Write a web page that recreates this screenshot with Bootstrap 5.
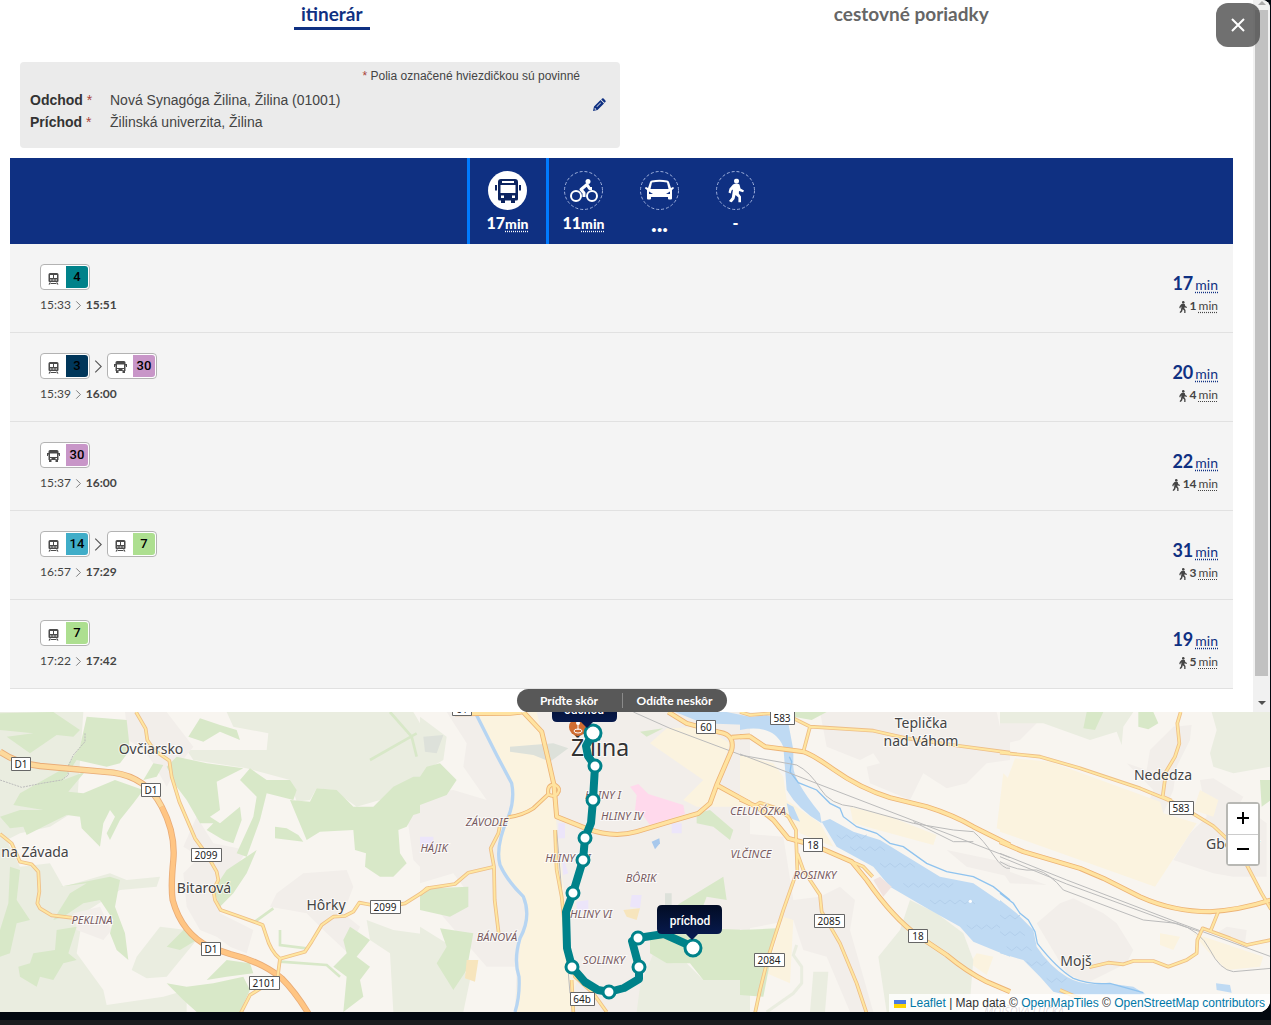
<!DOCTYPE html>
<html lang="sk">
<head>
<meta charset="utf-8">
<meta name="viewport" content="width=device-width, initial-scale=1">
<title>Itinerár</title>
<link rel="stylesheet" href="https://cdn.jsdelivr.net/npm/bootstrap@5.3.0/dist/css/bootstrap.min.css">
<script src="https://cdn.jsdelivr.net/npm/bootstrap@5.3.0/dist/js/bootstrap.bundle.min.js"></script>
<style>
  body { background: #1a1b1d; font-family: Lato, sans-serif; color: #444; }
  .shell { background: #02080f; padding: 0 1px 8px 0; }
  .app { background: #fff; border-radius: 0 8px 12px 0; overflow: hidden; }
  .main-col { padding: 0 20px 0 10px; }
  .mode-tabs { height: 62px; padding: 0 32px; }
  .mode-tabs a { font-size: 19px; line-height: 27px; font-weight: 700; color: #666; text-decoration: none; }
  .mode-tabs a.current { color: #0f3082; border-bottom: 3px solid #0f3082; padding: 0 7px; }
  .trip-form { background: #ebebeb; border-radius: 4px; max-width: 600px; height: 86px; margin: 0 10px 10px; padding: 4px 10px 0; font-family: "Liberation Sans", sans-serif; font-size: 14px; line-height: 22px; }
  .trip-form .note { font-size: 12px; line-height: 20px; padding-right: 30px; margin-bottom: 3px; }
  .trip-form dt { width: 80px; color: #333; }
  .star { color: #a94438; font-weight: 400; }
  .edit-btn { top: 36px; right: 14px; width: 14px; height: 14px; }
  .modes { background: #0f3082; height: 86px; }
  .modes button { width: 76px; height: 86px; color: #fff; background: none; padding-top: 13px; font-size: 16px; line-height: 26px; font-weight: 900; }
  .modes button.chosen { box-shadow: -3px 0 #007bff, 3px 0 #007bff; }
  .modes abbr { font-size: 14px; }
  .modes .pending { font-size: 24px; }
  .modes svg { width: 39px; height: 39px; }
  abbr { text-decoration: underline dotted 1px; text-underline-offset: 2px; cursor: default; }
  .trip { background: #f4f4f4; border-bottom: 1px solid #e1e1e1; height: 89px; padding: 20px 15px 0 30px; }
  .leg { width: 50px; height: 26px; background: #fff; border: 1px solid #b3b3b3; border-radius: 4px; padding: 1px; }
  .leg svg { width: 13px; height: 13px; margin: 2px 0 0 5px; }
  .leg b { width: 22px; height: 22px; border-radius: 0 3px 3px 0; color: #000; font: 500 13px/21px Roboto, sans-serif; text-align: center; }
  .no4 { background: #00828a; } .no3 { background: #00365a; } .no30 { background: #c896c8; } .no14 { background: #40adc8; } .no7 { background: #addf90; }
  .times { font-size: 12px; line-height: 16px; margin-top: 7px; }
  .total { font-size: 18px; line-height: 24px; font-weight: 700; color: #0f3082; margin-top: 7px; }
  .total abbr { font-size: 14px; font-weight: 400; margin-left: 2px; }
  .walk { font-size: 12px; line-height: 16px; margin-top: 1px; }
  .walk abbr { margin-left: 2px; }
  .shift { background: #585858; border-radius: 12px; width: 210px; height: 23px; }
  .shift button { background: none; color: #fff; font-size: 12px; line-height: 15px; font-weight: 700; padding: 0; }
  .shift button + button { border-left: 1px solid #8a8a8a; }
  .scroll-rail { width: 17px; background: #f1f1f1; padding: 0 2px; }
  .rail-arrow { height: 10px; }
  .rail-thumb { background: #c1c1c1; margin-bottom: 22px; }
  .close-btn { top: 3px; right: 10px; width: 44px; height: 44px; border-radius: 12px; background: rgba(80,80,80,.82); }
  .close-btn svg { display: block; margin: 0 auto; }
  .map { height: 300px; background: #f8f5f0; }
  .zoomer { top: 90px; right: 10px; width: 34px; border: 2px solid #b8b8b4; border-radius: 4px; background: #fff; }
  .zoomer button { height: 30px; background: #fff; padding: 0; }
  .zoomer button + button { border-top: 1px solid #ccc; }
  .zoomer svg { display: block; margin: 0 auto; }
  .credit { right: 0; bottom: 0; background: rgba(255,255,255,.8); font: 12px/18px "Liberation Sans", sans-serif; padding: 0 5px; color: #333; }
  .credit a { color: #0078a8; text-decoration: none; }
  .town { font: 14px "Noto Sans", sans-serif; fill: #444; text-anchor: middle; paint-order: stroke; stroke: #fff; stroke-opacity: .7; stroke-width: 2px; }
  .big { font-size: 23px; fill: #333; }
  .quarter { font: italic 11px "Noto Sans", sans-serif; fill: #785a60; text-anchor: middle; paint-order: stroke; stroke: #fff; stroke-opacity: .7; stroke-width: 2px; }
  .shield { font: 10px "Noto Sans", sans-serif; fill: #222; text-anchor: middle; }
  .plate { fill: #fff; stroke: #666; }
  .pin-text { font: 500 12px Roboto, sans-serif; fill: #fff; text-anchor: middle; }
</style>
</head>
<body>
<svg class="d-none" aria-hidden="true">
  <symbol id="tram" viewBox="0 0 13 13"><path fill="#4a4a4a" fill-rule="evenodd" d="M3 1h7q1.500 0 1.500 1.500V9q0 1-1 1H2.500q-1 0-1-1V2.500Q1.500 1 3 1zM3 3v3h3V3zm4 0v3h3V3zM3 7.500v1h1.500v-1zm5.500 0v1H10v-1zM5.500 7.500v1h2v-1zM2.500 10.500h1.500l-1 2H1.500zM9 10.500h1.500l1 2H10zM3 11h7v1H3z"/></symbol>
  <symbol id="bus" viewBox="0 0 13 13"><path fill="#4a4a4a" fill-rule="evenodd" d="M3 0h7q1.500 0 1.500 1.500V3H13v3h-1V4.500h-.5V10H11v2H8.500v-2h-4v2H2v-2h-.5V4.500H1V6H0V3h1.500V1.500Q1.500 0 3 0zM3 3.500v3.500h7V3.500zM3 8v1.200h1.500V8zm5.500 0v1.200H10V8z"/></symbol>
  <symbol id="walker" viewBox="0 0 16 24"><circle cx="8.500" cy="2.500" r="2.500"/><path d="M5 6q3.500-2 6.500 0l1 4 3.500 2-.9 1.800L11 12.500l-.2 2.500 2.200 3V24h-2.600v-5L7.500 16.500 6.500 20.500 3.500 24 1 22.500 3.800 19 5 11l-1.500 1-.8 3L.5 14l1-4z"/></symbol>
</svg>
<div class="shell">
<div class="app position-relative">
  <div class="d-flex">
    <main class="main-col flex-grow-1">
      <nav class="mode-tabs d-flex" aria-label="Zobrazenie">
        <div class="w-50 text-center"><a class="current d-inline-block" href="#itinerar">itinerár</a></div>
        <div class="w-50 text-center"><a class="d-inline-block" href="#poriadky">cestovné poriadky</a></div>
      </nav>
      <section class="trip-form position-relative">
        <div class="note text-end"><span class="star">*</span> Polia označené hviezdičkou sú povinné</div>
        <dl class="m-0">
          <div class="d-flex"><dt>Odchod <span class="star">*</span></dt><dd class="m-0">Nová Synagóga Žilina, Žilina (01001)</dd></div>
          <div class="d-flex"><dt>Príchod <span class="star">*</span></dt><dd class="m-0">Žilinská univerzita, Žilina</dd></div>
        </dl>
        <button class="edit-btn position-absolute border-0 bg-transparent p-0 d-flex" aria-label="Upraviť"><svg width="14" height="14" viewBox="0 0 14 14" fill="#0f3082"><path fill-rule="evenodd" d="M1 13l1-4.500L8.500 2l3.500 3.500L5.500 12zm1.500-1.800l.7.600 1.300-.4-1.600-1.600zM4.500 8.600l.5.500 4-4-.5-.5z"/><path d="M9.200 1.500l.9-.9q.8-.7 1.500 0l1.800 1.800q.7.800 0 1.500l-.9.900z"/></svg></button>
      </section>
      <nav class="modes d-flex justify-content-center" aria-label="Doprava">
        <button class="chosen border-0 px-0 pb-0 d-flex flex-column align-items-center">
          <svg viewBox="0 0 39 39"><circle cx="19.500" cy="19.500" r="19.500" fill="#fff"/><path fill="#0c2460" fill-rule="evenodd" d="M13 8h14q3 0 3 3v17q0 1.500-1.500 1.500H27V32h-4v-2.500h-6V32h-4v-2.500h-1.500Q10 29.500 10 28V11q0-3 3-3zM14 10v2h12v-2zM12.500 14v8h15v-8zM13 24.500v2.500h3v-2.500zm11 0v2.500h3v-2.500zM7 14h2v5.500H7zM31 14h2v5.500h-2z"/></svg>
          <span>17<abbr title="minút">min</abbr></span></button>
        <button class="border-0 px-0 pb-0 d-flex flex-column align-items-center">
          <svg viewBox="0 0 39 39" fill="none" stroke="#fff"><circle cx="19.500" cy="19.500" r="19" stroke="#9fb0dc" stroke-dasharray="3 2"/><g stroke-width="2"><circle cx="12" cy="25" r="5"/><circle cx="28" cy="25" r="5"/><path stroke-width="3" stroke-linejoin="round" d="M20 26v-4l-3-3.500 6-5 2.500 4H28"/></g><circle cx="24" cy="10.500" r="2.500" fill="#fff" stroke="none"/></svg>
          <span>11<abbr title="minút">min</abbr></span></button>
        <button class="border-0 px-0 pb-0 d-flex flex-column align-items-center">
          <svg viewBox="0 0 39 39"><circle cx="19.500" cy="19.500" r="19" fill="none" stroke="#9fb0dc" stroke-dasharray="3 2"/><path fill="#fff" fill-rule="evenodd" d="M12 9.500q7.500-1.500 15 0 1.500.3 2 1.500l2 6 2-1q1 0 .8 1.500L32 19v8.500q0 1-1 1h-2q-1 0-1-1V26H11v1.500q0 1-1 1H8q-1 0-1-1V19l-2-1.500Q5 16 6 16l2 1 2-6q.5-1.200 2-1.500zM12 11.500L10.500 18h18L27 11.500q-7.500-1.300-15 0zM9 20.500V23h4zm21 0L26 23h4z"/></svg>
          <span class="pending">...</span></button>
        <button class="border-0 px-0 pb-0 d-flex flex-column align-items-center">
          <svg viewBox="0 0 39 39"><circle cx="19.500" cy="19.500" r="19" fill="none" stroke="#9fb0dc" stroke-dasharray="3 2"/><use href="#walker" x="12" y="7.500" width="16" height="24" fill="#fff"/></svg>
          <span>-</span></button>
      </nav>
      <section id="trips"></section>
      <div class="shift d-flex align-items-center mx-auto"><button class="w-50 border-0">Príďte skôr</button><button class="w-50 border-top-0 border-end-0 border-bottom-0">Odíďte neskôr</button></div>
    </main>
    <div class="scroll-rail d-flex flex-column" aria-hidden="true">
      <svg class="rail-arrow" viewBox="0 0 13 10"><path d="M3 5l4-4 4 4z" fill="#aaa"/></svg>
      <div class="rail-thumb flex-grow-1"></div>
      <svg class="rail-arrow mb-1" viewBox="0 0 13 10"><path d="M3 3h8L7 7z" fill="#505050"/></svg>
    </div>
  </div>
  <button class="close-btn position-absolute border-0 p-0" aria-label="Zavrieť"><svg width="14" height="14" viewBox="0 0 14 14" stroke="#fff" stroke-width="2"><path d="M1 1l12 12M13 1L1 13"/></svg></button>

  <section class="map position-relative overflow-hidden" aria-label="Mapa">
  <svg class="d-block" width="100%" height="300" viewBox="0 712 1270 300" preserveAspectRatio="xMidYMid slice">
    <defs>
      <g id="roads">
        <g transform="translate(0 700) scale(.33333)">
          <path d="M408 36L437 86L442 120L462 150L508 182L515 230L538 305L585 415L620 463L650 515L655 540L640 570L645 600L662 630L720 650L788 675L798 705Q812 755 840 776L915 755L935 725L965 675L1000 650L1035 648L1060 635L1078 608L1100 612L1155 622L1215 610L1290 563"/>
          <path d="M0 402L35 430L60 485L95 493L115 515L118 575L112 610L120 625L155 646L230 655M840 776L833 830L790 860L750 885L722 940"/>
        </g>
        <g transform="translate(420 680) scale(.33333)">
          <path d="M0 643L20 625L105 612L145 578L222 560M265 415L240 435L235 460L212 505L222 560L224 660L236 760M405 450L410 570L425 650L440 800L465 890L520 940L560 996M455 900L460 996"/>
        </g>
        <g transform="translate(740 700) scale(.33333)">
          <path d="M0 36L30 45L90 40L150 50L210 80L190 155M210 80L400 92L500 115L660 138L810 158M168 410L172 510L130 630L85 770L60 870L45 940M172 460L190 510L240 585L245 635L300 730L350 850L380 940M340 487L370 500L398 530M40 320L60 308L110 325L145 350L168 390V420"/>
        </g>
        <g transform="translate(1000 690) scale(.33333)">
          <path d="M0 188L120 200L240 235L420 295L505 330L545 350L640 408L685 450L730 505L785 610L813 658M542 66L532 100L538 160L525 200L498 245L488 320L515 332M268 832L325 818L370 823L400 813L460 813L505 830L560 810L590 790L592 750L608 715L690 745L740 765L813 750M655 665L632 722M180 900L250 930"/>
        </g>
      </g>
      <g id="mainroads">
        <g transform="translate(420 680) scale(.33333)"><path d="M105 101L270 100L305 96M310 96L365 155L385 240L402 315L410 410L500 446Q580 475 650 455L750 425L835 400L870 370L890 315L935 210Q945 165 900 157L800 130L745 96M890 315L990 370M935 172L990 168"/></g>
        <g transform="translate(740 700) scale(.33333)"><path d="M0 110L30 110L75 140L190 155Q220 165 280 208Q360 265 450 293L560 320Q640 345 700 380L810 435M0 297L50 320L100 360L145 415L220 435L335 485L380 540Q460 655 535 708L620 765Q680 815 740 845L810 875"/></g>
        <g transform="translate(1000 690) scale(.33333)"><path d="M0 455L70 485L240 535L310 565L420 620Q520 665 630 665Q720 660 813 630"/></g>
      </g>
      <g id="ramp">
        <g transform="translate(420 680) scale(.33333)"><path d="M265 412Q310 405 340 385L385 343M385 343Q380 312 405 314Q425 325 412 342Q398 352 385 343"/></g>
      </g>
    </defs>
    <rect y="712" width="1270" height="300" fill="#f8f5f0"/>
    <g transform="translate(0 700) scale(.33333)">
      <path fill="#eaede0" d="M0 36H250L230 330L150 380L60 400L20 420L60 500L150 490L190 560L330 520L380 540L480 530L470 560L360 570L250 640L230 760L310 870L320 915L490 890L560 870V936H0zM560 150L800 150L805 100L700 80L680 36H1240L1290 120V225L1230 240L1210 290L1140 300L1070 320L1000 270L950 265L930 300L890 305L870 240L740 205L580 180zM480 680L560 690L590 720L500 830L440 835L395 810L410 770zM1100 660L1180 690L1290 705V936H1180L1170 760L1110 720z"/>
      <path fill="#f2eeea" d="M375 36H500L580 140L540 190L500 260L460 190L430 150L385 120zM590 350L640 430L740 450L700 520L640 560L660 640L760 690L740 760L690 740L650 710L600 690L560 620L550 520L600 470L550 440zM830 580L910 520L1040 510L1060 560L1030 640L1080 680L1040 755L970 690L920 640L810 620zM220 640L300 620L335 690L310 720L230 690zM1220 340H1290V530L1240 480z"/>
      <path fill="#d8e8c8" d="M0 40L160 36L240 90L220 110L170 105L90 160L20 110L100 100L0 90zM260 50L380 60L390 150L360 190L320 200L230 180L190 240L255 215L205 275L250 280L345 240L430 270L400 310L360 360L330 420L320 400L345 350L330 330L310 370L300 440L245 385L240 350L200 345L150 370L80 405L70 380L30 385L0 350L60 330L130 330L40 315L60 280L200 200L240 140zM600 55L660 75L710 90L720 120L660 95L610 125L565 110zM530 170L620 190L730 205L650 245L660 330L630 350L660 370L720 320L725 360L700 430L670 420L620 390L640 370L600 370L560 300L530 260L500 200zM460 190L490 195L470 230L430 240zM750 205L800 240L870 240L890 270L880 300L800 280L780 360L740 470L710 460L760 350L770 290L720 240zM825 380L860 385L895 405L910 425L825 415zM870 300L930 305L950 265L1010 270L1060 320L1120 320L1180 260L1240 230H1290V330L1240 345L1220 380L1195 390L1200 460L1220 490L1180 530L1140 530L1095 500L1098 460L1065 450L1060 390L960 395L920 420zM30 500L60 510L50 600L90 660L50 670L30 760L0 770V690L25 610zM330 530L360 540L345 620L375 700L385 780L350 750L330 700L340 660L300 600L250 610L190 650L160 660L210 580L260 550L180 560zM170 690L230 680L205 760L230 780L190 790L160 840L120 830L110 860L60 830L55 800L90 790L100 760L165 750zM500 850L560 860L640 850L730 830L750 870L720 936H590L550 900zM620 840L680 780L750 790L760 820L680 830zM770 450L740 520L700 580L660 620L640 570L680 510zM560 680L590 720L540 750L500 740zM1050 680L1110 720L1070 770L1110 800L1080 840L1090 890L1030 936L1040 830L1000 800L1040 760L1030 720z"/>
      <path fill="none" stroke="#d8e8c8" stroke-width="8" d="M1110 180L1250 100M1170 36L1235 110L1250 170M765 665L820 625M840 690V735L920 745M840 785L980 795L1020 830"/>
      <path fill="none" stroke="#bbb" stroke-width="3" stroke-dasharray="6 3" d="M255 100V125L220 165L203 202L205 225L185 240L125 250L65 262L0 240"/>
      <path fill="none" stroke="#e9ac77" stroke-width="19" d="M0 155Q50 190 120 198L340 218Q440 232 485 320Q527 400 520 480Q512 560 518 600Q545 700 630 742L690 762Q785 785 845 835Q885 875 925 940"/>
      <path fill="none" stroke="#fdd99c" stroke-width="14" d="M0 155Q50 190 120 198L340 218Q440 232 485 320"/><path fill="none" stroke="#ffc583" stroke-width="14" d="M485 320Q527 400 520 480Q512 560 518 600Q545 700 630 742L690 762Q785 785 845 835Q885 875 925 940"/>
    </g>
    <g transform="translate(420 680) scale(.33333)">
      <path fill="#f2eeea" d="M80 96H990V760L880 740L700 900L660 996H285L290 860L200 860L60 700L130 620L100 580L0 610V340L100 330L200 360L130 260L140 190z"/>
      <path fill="#fbf3df" d="M160 96H350L400 300L410 440L435 660L440 800L470 900L450 996H285L300 800L320 680L240 560L235 470L275 370L270 310zM740 145L850 140L930 190L890 310L990 380H830L790 360L850 300L690 190z"/>
      <path fill="#eaede0" d="M0 110L80 170L70 240L0 280zM700 820L740 850L800 850L850 900L990 890V996H650L660 920zM0 740L80 790L150 900L130 996H0z"/>
      <path fill="#d8e8c8" d="M20 260L60 250L110 300L80 345L0 375V290zM30 625L145 620L145 680L90 710L0 690V640zM60 745L160 760L140 870L100 930L50 850L80 800zM690 760L840 745L990 750V900L850 900L810 850L740 850L690 820zM830 400L870 390L940 450L930 480L880 440L830 430zM780 670L910 590L920 660L860 650L830 730L740 700zM730 145L680 170L660 155z"/>
      <path fill="#dde1da" d="M270 200L400 190L445 205L390 245L340 225L270 215zM10 170L70 165L50 220L15 215zM735 640H755V700H735z"/>
      <path fill="#ffd9ec" d="M630 320L655 312L685 342L790 375L795 402L690 435L665 400L645 390L650 345z"/>
      <path fill="#ece5fa" d="M635 645H665L660 685L630 680zM0 470H40V500H0zM415 430H435V475H415zM425 520L445 580L430 585zM755 430H785V460H755zM470 665L505 660V700L470 690z"/>
      <path fill="#f7e5bd" d="M140 840H175L165 905L135 895zM610 690L660 685L650 720L620 710z"/>
      <path fill="#a8c8ec" d="M695 485L718 475L720 490L705 508z"/>
      <path fill="#bfdaf3" d="M765 96L850 130L990 135V110L920 96z"/>
      <path fill="none" stroke="#b7d5f2" stroke-width="10" d="M165 96L230 225L275 310Q285 360 265 410Q225 500 240 555Q260 600 310 650Q335 710 300 775Q280 840 297 890Q300 950 285 996"/>
      <path fill="none" stroke="#bbb" stroke-width="3" d="M640 96L750 145L990 235M410 450L450 940"/>
    </g>
    <g transform="translate(740 700) scale(.33333)">
      <path fill="#f2eeea" d="M0 400L130 410L160 600L240 590L300 560L345 600L330 690L400 936H330L260 770L190 750L160 660L0 690zM240 36H770L780 80L810 120V180L740 190L680 250L620 265L550 220L510 300L390 250L380 200L420 190L400 160L360 180L260 140zM620 450L810 490V530L680 500z"/>
      <path fill="#fbf3df" d="M0 165L100 190L130 230L140 300L240 370L280 440L180 400L140 350L0 310zM330 320L450 350L590 405L580 435L340 370zM130 650L160 660L150 850L80 820zM710 760L760 770L740 825L690 790zM790 220L810 240V400L770 385z"/>
      <path fill="#d8e8c8" d="M0 690L110 685L70 890L0 885zM160 36H260L215 60L160 50z"/>
      <path fill="#eaede0" d="M510 600L590 640L670 700L700 780L690 900L650 936H440L415 770L480 690zM220 815H265L255 936H210z"/>
      <path fill="#bfdaf3" d="M0 55L80 45L145 70L160 150V200Q160 240 240 340L245 370Q175 330 140 270L130 140Q100 70 0 90zM140 310L160 320L180 365L150 355zM245 365L270 357L340 395L420 420L600 530L700 550L810 625V770L700 725L660 680L570 630L450 560L400 500L290 440z"/>
      <path fill="none" stroke="#b3cfeb" stroke-width="3" stroke-linejoin="round" d="M290 405l15 12 15-12 15 12 15-12 15 12 15-12M330 440l15 12 15-12 15 12 15-12 15 12 15-12 15 12M420 490l15 12 15-12 15 12 15-12 15 12 15-12 15 12M490 550l15 12 15-12 15 12 15-12 15 12 15-12 15 12 15-12 15 12 15-12M570 600l15 12 15-12 15 12 15-12 15 12 15-12 15 12 15-12 15 12M680 675l15 12 15-12 15 12 15-12 15 12 15-12 15 12"/>
      <path fill="none" stroke="#8fc3ef" stroke-width="4" d="M148 170L155 185L150 215L175 248L230 270L270 310L300 325L310 350L350 380L410 400L450 430L490 440L560 490L620 515L700 530L760 560L810 600"/>
      <path fill="none" stroke="#bbb" stroke-width="3" d="M0 162L810 473M0 165L170 195Q210 215 240 265T340 320L520 370L640 390L700 395Q730 420 760 465T810 505M520 365L640 425L700 425"/>
      <circle cx="691" cy="604" r="5" fill="#fff"/>
      <path fill="#f1e3df" d="M400 540L420 530L455 560L430 590z"/>
      <path fill="none" stroke="#eaede0" stroke-width="9" d="M170 735L160 765L185 800V850L160 880L80 936"/>
    </g>
    <g transform="translate(1000 690) scale(.33333)">
      <path fill="#f2eeea" d="M0 80L110 100L60 150L0 165zM380 220L440 240L450 180L520 110L575 105L570 150L530 230L520 300L490 370L440 350L460 300zM600 270L640 265L730 320L720 340L800 400V560L700 560L640 550L520 510L570 430L620 380zM220 625L310 670L350 700L400 780L380 820L260 880L200 850L110 700L180 640zM0 535L140 585L30 580zM680 710L740 720L735 760L650 730z"/>
      <path fill="#fbf3df" d="M45 205L150 215L480 335L490 370L590 400L465 590L240 510L0 425V370L30 310L10 300zM600 300L655 330L640 380L580 360zM480 730L540 740L520 780L480 765zM580 730L790 800L780 830L680 840L620 780z"/>
      <path fill="#eaede0" d="M0 66H400L370 110L365 165L350 125L270 150L130 100L0 100zM635 66H813V230L700 250L640 230L630 190L650 120z"/>
      <path fill="#d8e8c8" d="M415 66H460L475 100L445 118L415 110zM260 66H310L285 120L250 115zM780 270H813V330L785 350z"/>
      <path fill="#bfdaf3" d="M0 630L50 670L100 720L110 770Q150 830 200 860T320 880L400 890L440 915H200L160 905L120 860L70 810L0 790zM648 880L690 885L695 908L650 900z"/>
      <path fill="none" stroke="#b3cfeb" stroke-width="3" d="M0 675l15 12 15-12 15 12 15-12M0 725l15 12 15-12 15 12 15-12 15 12M20 770l15 12 15-12 15 12 15-12 15 12M80 815l15 12 15-12 15 12 15-12M140 865l15 12 15-12 15 12 15-12"/>
      <path fill="none" stroke="#8fc3ef" stroke-width="4" d="M0 610L40 640L60 670L85 690L105 725L112 760Q170 835 220 865Q270 885 330 880L430 908"/>
      <path fill="none" stroke="#bbb" stroke-width="3" d="M0 490L200 570L540 700L813 800M0 500L200 582L500 692L600 725M0 515Q50 545 110 540Q150 550 190 600L430 690L530 700Q600 720 630 780T700 845L813 835"/>
    </g>
    <use href="#roads" fill="none" stroke="#eebf88" stroke-width="11" stroke-linejoin="round"/>
    <use href="#mainroads" fill="none" stroke="#edb375" stroke-width="15" stroke-linejoin="round"/>
    <use href="#ramp" fill="none" stroke="#edb375" stroke-width="12"/>
    <use href="#roads" fill="none" stroke="#ffe6a0" stroke-width="6" stroke-linejoin="round"/>
    <use href="#mainroads" fill="none" stroke="#ffe3a0" stroke-width="10" stroke-linejoin="round"/>
    <use href="#ramp" fill="none" stroke="#ffe3a0" stroke-width="7"/>

    <g class="town">
      <text x="151" y="754">Ovčiarsko</text><text x="35" y="857">na Závada</text><text x="204" y="893">Bitarová</text><text x="326" y="910">Hôrky</text>
      <text x="921" y="728">Teplička</text><text x="921" y="746">nad Váhom</text><text x="1163" y="780">Nededza</text><text x="1233" y="849">Gbeľany</text><text x="1076" y="966">Mojš</text>
      <text class="big" x="600" y="756">Žilina</text>
    </g>
    <g class="quarter">
      <text x="92" y="924">PEKLINA</text><text x="434" y="852">HÁJIK</text><text x="487" y="826">ZÁVODIE</text><text x="497" y="941">BÁNOVÁ</text><text x="603" y="799">HLINY I</text><text x="622" y="820">HLINY IV</text><text x="568" y="862">HLINY VII</text><text x="641" y="882">BÔRIK</text><text x="591" y="918">HLINY VI</text><text x="604" y="964">SOLINKY</text><text x="758" y="815">CELULÓZKA</text><text x="751" y="858">VLČINCE</text><text x="815" y="879">ROSINKY</text><text x="1024" y="1015">MOJŠOVÁ LÚČKA</text>
    </g>
    <g class="plate">
      <path d="M11.500 757.500h19v13h-19zM141.500 783.500h19v13h-19zM191.500 848.500h30v13h-30zM370.500 900.500h30v13h-30zM201.500 942.500h19v13h-19zM249.500 976.500h30v13h-30zM452.500 702.500h19v13h-19zM696.500 720.500h19v13h-19zM770.500 711.500h24v13h-24zM803.500 838.500h19v13h-19zM814.500 914.500h30v13h-30zM754.500 953.500h30v13h-30zM908.500 929.500h19v13h-19zM1169.500 801.500h24v13h-24zM570.500 992.500h24v13h-24z"/>
    </g>
    <g class="shield">
      <text x="21" y="768">D1</text><text x="151" y="794">D1</text><text x="206" y="859">2099</text><text x="385" y="911">2099</text><text x="211" y="953">D1</text><text x="264" y="987">2101</text><text x="462" y="713">61</text><text x="706" y="731">60</text><text x="782" y="722">583</text><text x="813" y="849">18</text><text x="829" y="925">2085</text><text x="769" y="964">2084</text><text x="918" y="940">18</text><text x="1181" y="812">583</text><text x="582" y="1003">64b</text>
    </g>
    <circle cx="578" cy="727" r="9" fill="#cf6c31"/><g fill="none" stroke="#fff"><path d="M578 724v6"/><ellipse cx="578" cy="731" rx="4" ry="2"/></g><circle cx="578" cy="723" r="2" fill="#fff"/>
    <path fill="none" stroke="#00828a" stroke-width="8" stroke-linejoin="round" d="M593 733L586 746L588 756L595 766L593 800L591 823L585 838L583 860L573 893L566 912L567 948L572 967L585 982L598 990L609 992L624 988L639 979V967L632 941L638 938L664 934L693 947"/>
    <g fill="#fff" stroke="#00828a" stroke-width="3">
      <circle cx="593" cy="733" r="8"/><circle cx="595" cy="766" r="6"/><circle cx="593" cy="800" r="6"/><circle cx="585" cy="838" r="6"/><circle cx="583" cy="860" r="6"/><circle cx="573" cy="893" r="6"/><circle cx="572" cy="967" r="6"/><circle cx="609" cy="992" r="6"/><circle cx="639" cy="967" r="6"/><circle cx="638" cy="938" r="6"/><circle cx="693" cy="948" r="8"/>
    </g>
    <linearGradient id="navy" x2="0" y2="1"><stop stop-color="#020c24"/><stop offset="1" stop-color="#081c54"/></linearGradient>
    <path fill="url(#navy)" d="M557 693h55q5 0 5 5v19q0 5-5 5h-19l-6 6-6-6h-24q-5 0-5-5v-19q0-5 5-5z"/>
    <path fill="url(#navy)" d="M662 905h55q5 0 5 5v19q0 5-5 5h-19l-6 6-6-6h-24q-5 0-5-5v-19q0-5 5-5z"/>
    <text class="pin-text" x="584" y="714">odchod</text><text class="pin-text" x="690" y="925">príchod</text>
  </svg>
  <div class="zoomer position-absolute d-flex flex-column">
    <button class="border-0" aria-label="Priblížiť"><svg width="14" height="14" viewBox="0 0 14 14" stroke="#000" stroke-width="2"><path d="M1 6h12M7 0v12"/></svg></button>
    <button class="border-start-0 border-end-0 border-bottom-0" aria-label="Oddialiť"><svg width="14" height="14" viewBox="0 0 14 14" stroke="#000" stroke-width="2"><path d="M1 6h12"/></svg></button>
  </div>
  <div class="credit position-absolute"><svg width="12" height="8" viewBox="0 0 12 8"><path fill="#4c7be1" d="M0 0h12v4H0z"/><path fill="#ffd500" d="M0 4h12v4H0z"/></svg> <a href="#leaflet">Leaflet</a> | Map data © <a href="#tiles">OpenMapTiles</a> © <a href="#osm">OpenStreetMap contributors</a></div>
  </section>
</div>
</div>
<script>
  const trips = [
    { legs: [["tram", 4]], from: "15:33", to: "15:51", total: 17, walk: 1 },
    { legs: [["tram", 3], ["bus", 30]], from: "15:39", to: "16:00", total: 20, walk: 4 },
    { legs: [["bus", 30]], from: "15:37", to: "16:00", total: 22, walk: 14 },
    { legs: [["tram", 14], ["tram", 7]], from: "16:57", to: "17:29", total: 31, walk: 3 },
    { legs: [["tram", 7]], from: "17:22", to: "17:42", total: 19, walk: 5 }
  ];
  const chevron = (w, h) => `<svg width="${w}" height="${h}" viewBox="0 0 7 12" fill="none" stroke="#555"><path d="M.5.5L6 6 .5 11.500"/></svg>`;
  document.getElementById("trips").innerHTML = trips.map(t => `
    <article class="trip d-flex justify-content-between">
      <div>
        <div class="d-flex align-items-center">${t.legs.map(([kind, no]) => `<span class="leg d-flex justify-content-between align-items-center"><svg><use href="#${kind}"/></svg><b class="no${no}">${no}</b></span>`).join(`<span class="d-flex px-1">${chevron(9, 13)}</span>`)}</div>
        <div class="times">${t.from}<span class="px-1">${chevron(7, 9)}</span><b>${t.to}</b></div>
      </div>
      <div class="text-end">
        <div class="total">${t.total}<abbr title="minút">min</abbr></div>
        <div class="walk"><svg width="8" height="12" fill="#444"><use href="#walker"/></svg> <b>${t.walk}</b><abbr title="minút">min</abbr></div>
      </div>
    </article>`).join("");
</script>
</body>
</html>
